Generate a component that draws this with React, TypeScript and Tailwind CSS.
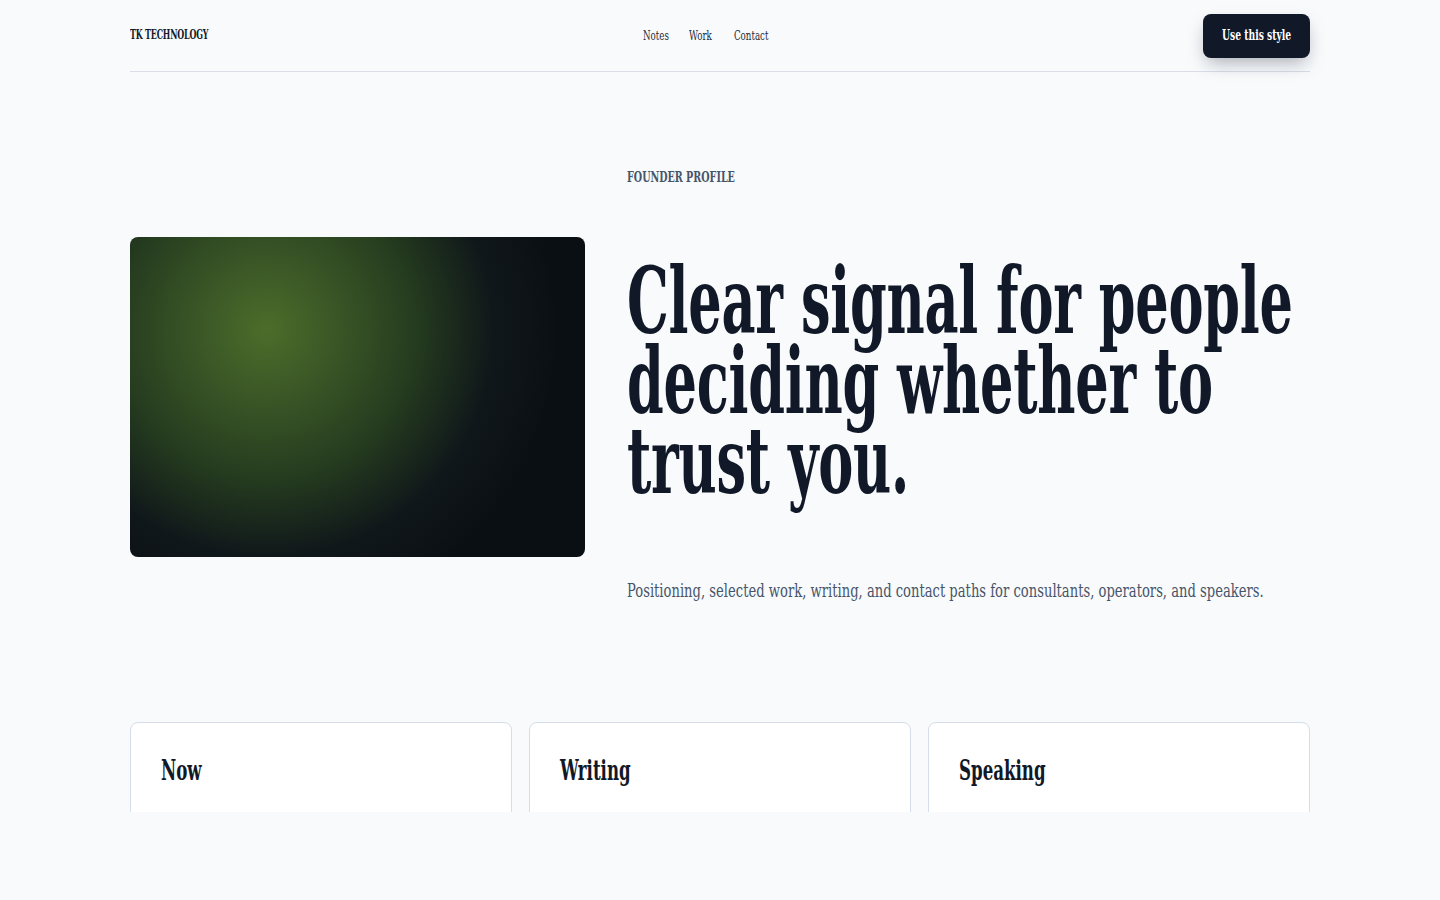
const serif = "font-['DejaVu_Serif_Condensed','DejaVu_Serif','Liberation_Serif',serif]";

function Header() {
  return (
    <header className="h-[72px] flex items-center justify-between border-b border-[#d9dee7]">
      <span className="w-[79px] whitespace-nowrap text-[13px] font-bold tracking-[-0.02em] text-[#111827] -mt-[1px]">
        <span className="inline-block origin-left scale-x-[0.68]">TK TECHNOLOGY</span>
      </span>
      <nav className="flex gap-5 text-[13px] text-[#1f2937] whitespace-nowrap">
        <a className="w-[26px]">
          <span className="inline-block origin-left scale-x-[0.74]">Notes</span>
        </a>
        <a className="w-[25px]">
          <span className="inline-block origin-left scale-x-[0.74]">Work</span>
        </a>
        <a className="w-[36px]">
          <span className="inline-block origin-left scale-x-[0.74]">Contact</span>
        </a>
      </nav>
      <button className="w-[107px] h-[44px] pl-[19px] text-left rounded-lg bg-[#111827] text-white text-[14px] font-bold whitespace-nowrap shadow-[0_8px_18px_-4px_rgba(15,23,42,0.35)]">
        <span className="inline-block origin-left scale-x-[0.73]">Use this style</span>
      </button>
    </header>
  );
}

function Hero() {
  return (
    <section className="flex items-start gap-[42px] pt-[95px]">
      <div
        className="w-[455px] h-[320px] shrink-0 rounded-lg mt-[70px]"
        style={{
          background:
            "radial-gradient(circle at 30% 29%, #4b6d2a 0%, #3a5626 18%, #253c1f 38%, #10171a 58%, #0a0f14 75%)",
        }}
      />
      <div className="w-[683px] min-w-0 flex flex-col">
        <div className="h-[20px] leading-[20px] text-[14px] font-bold text-[#475569] whitespace-nowrap">
          <span className="inline-block origin-left scale-x-[0.76]">FOUNDER PROFILE</span>
        </div>
        <h1 className="mt-[74px] w-[1085px] h-[240px] origin-top-left scale-x-[0.635] text-[92px] leading-[80px] font-bold tracking-[-0.004em] text-[#111827]">
          Clear signal for people deciding whether to trust you.
        </h1>
        <p className="mt-[76px] h-[28px] leading-[28px] text-[18px] text-[#475569] whitespace-nowrap">
          <span className="inline-block origin-left scale-x-[0.811]">
            Positioning, selected work, writing, and contact paths for consultants, operators, and speakers.
          </span>
        </p>
      </div>
    </section>
  );
}

function Card({ title }: { title: string }) {
  return (
    <div className="h-[140px] rounded-lg border border-[#d6deea] bg-white px-[30px] pt-[30px]">
      <h2 className="h-[36px] leading-[36px] text-[28px] font-bold text-[#111827] whitespace-nowrap">
        <span className="inline-block origin-left scale-x-[0.66]">{title}</span>
      </h2>
    </div>
  );
}

export default function App() {
  return (
    <div className={`min-h-[900px] bg-[#f8fafc] ${serif}`}>
      <div className="h-[812px] overflow-hidden">
        <div className="w-[1180px] mx-auto">
          <Header />
          <Hero />
          <div className="grid grid-cols-3 gap-[17px] mt-[117px]">
            <Card title="Now" />
            <Card title="Writing" />
            <Card title="Speaking" />
          </div>
        </div>
      </div>
    </div>
  );
}
